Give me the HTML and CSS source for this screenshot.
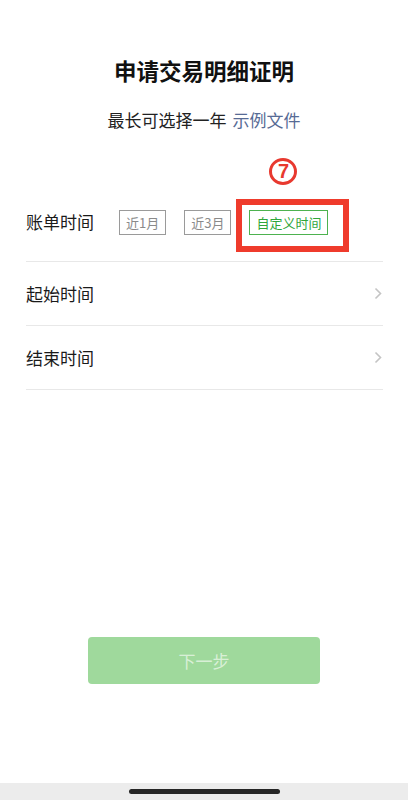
FILE: index.html
```html
<!DOCTYPE html>
<html lang="zh">
<head>
<meta charset="utf-8">
<link rel="stylesheet" href="styles.css">
</head>
<body>
<div class="page">
  <h1 class="title">申请交易明细证明</h1>
  <p class="subtitle">最长可选择一年 <span class="link">示例文件</span></p>
  <div class="list">
    <div class="row row-first">
      <span class="label">账单时间</span>
      <div class="chips">
        <span class="chip">近1月</span>
        <span class="chip">近3月</span>
        <span class="chip chip-active">自定义时间<span class="mark"></span><span class="num">7</span></span>
      </div>
    </div>
    <div class="row">
      <span class="label">起始时间</span>
      <svg class="chev" width="8" height="13" viewBox="0 0 8 13"><polyline points="1.5,1.5 6.5,6.5 1.5,11.5" fill="none" stroke="#c4c4c4" stroke-width="1.6"/></svg>
    </div>
    <div class="row">
      <span class="label">结束时间</span>
      <svg class="chev" width="8" height="13" viewBox="0 0 8 13"><polyline points="1.5,1.5 6.5,6.5 1.5,11.5" fill="none" stroke="#c4c4c4" stroke-width="1.6"/></svg>
    </div>
  </div>
  <div class="btn-wrap"><button class="btn">下一步</button></div>
  <div class="home-bar"><span class="indicator"></span></div>
</div>
</body>
</html>
```

FILE: styles.css
```css
* { box-sizing: border-box; }
html, body { margin: 0; padding: 0; background: #fff; }
body { font-family: "Noto Sans CJK SC", "Noto Sans", sans-serif; color: #1a1a1a; }
.page { min-height: 800px; display: flex; flex-direction: column; }
.title {
  margin: 55px 0 0;
  font-size: 22.5px;
  line-height: 30px;
  font-weight: 700;
  text-align: center;
  color: #111;
}
.subtitle {
  margin: 23px 0 0;
  font-size: 17px;
  line-height: 24px;
  text-align: center;
  color: #222;
}
.link { color: #576b95; margin-left: 2px; }
.list { margin: 0 25px 0 26px; }
.row {
  display: flex;
  align-items: center;
  justify-content: space-between;
  height: 64px;
  border-bottom: 1px solid #e8e8e8;
}
.row-first {
  justify-content: flex-start;
  height: auto;
  padding: 77px 0 26px;
}
.label { font-size: 17px; line-height: 26px; color: #1a1a1a; }
.chips { display: flex; gap: 18px; margin-left: 25px; }
.chip {
  position: relative;
  display: inline-block;
  height: 25px;
  padding: 0 6px;
  border: 1px solid #9a9a9a;
  font-size: 13px;
  line-height: 23px;
  color: #8a8a8a;
}
.chip-active { border-color: #4db24f; color: #2fa63a; }
.mark {
  position: absolute;
  left: -14px;
  top: -12px;
  width: 113px;
  height: 53px;
  border: 6px solid #ef3b2c;
}
.num {
  position: absolute;
  left: 19px;
  top: -53px;
  width: 28px;
  height: 27px;
  border: 3px solid #e8392f;
  border-radius: 50%;
  color: #e8392f;
  font-family: "Liberation Sans", sans-serif;
  font-weight: 700;
  font-size: 20px;
  line-height: 21px;
  text-align: center;
}
.chev { margin-right: 1px; }
.btn-wrap { display: flex; justify-content: center; margin-top: 247px; }
.btn {
  width: 232px;
  height: 47px;
  border: none;
  border-radius: 4px;
  background: #9fd99c;
  color: rgba(255, 255, 255, 0.62);
  font-family: "Noto Sans CJK SC", sans-serif;
  font-size: 17px;
}
.home-bar {
  margin-top: auto;
  height: 17px;
  background: #ececec;
  display: flex;
  justify-content: center;
  align-items: flex-start;
}
.indicator {
  margin-top: 6px;
  width: 151px;
  height: 5px;
  border-radius: 3px;
  background: #262626;
}
```
